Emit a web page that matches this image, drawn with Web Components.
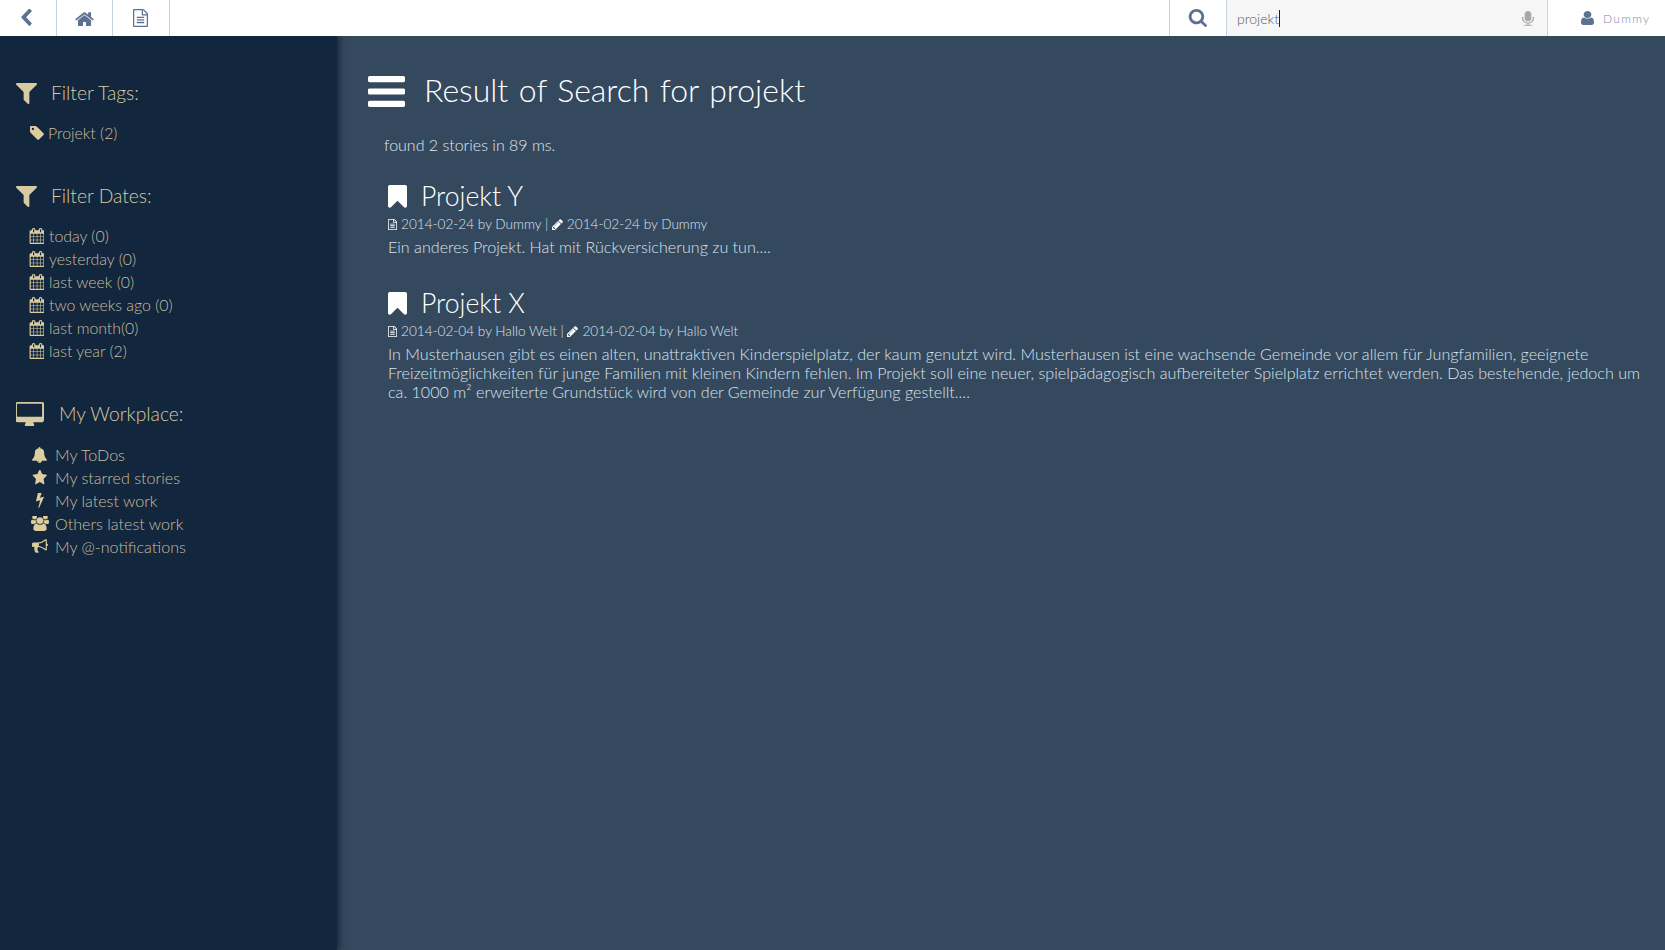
<!DOCTYPE html>
<html lang="en">
<head>
<meta charset="utf-8">
<title>Result of Search for projekt</title>
<style>
  html, body { margin: 0; height: 100%; }
  body { font-family: Lato, "Liberation Sans", sans-serif; font-weight: 300; background: #34495e; overflow: hidden; }
</style>
</head>
<body>
<app-shell>
  <top-bar slot="top" query="projekt" user="Dummy"></top-bar>
  <side-nav slot="side">
    <nav-section icon="filter" label="Filter Tags:" gap="14">
      <nav-item icon="tag" text-gap="4">Projekt (2)</nav-item>
    </nav-section>
    <nav-section icon="filter" label="Filter Dates:" gap="14">
      <nav-item icon="calendar">today (0)</nav-item>
      <nav-item icon="calendar">yesterday (0)</nav-item>
      <nav-item icon="calendar">last week (0)</nav-item>
      <nav-item icon="calendar">two weeks ago (0)</nav-item>
      <nav-item icon="calendar">last month(0)</nav-item>
      <nav-item icon="calendar">last year (2)</nav-item>
    </nav-section>
    <nav-section icon="desktop" label="My Workplace:" gap="15" wide>
      <nav-item icon="bell" icon-box="21" text-gap="5">My ToDos</nav-item>
      <nav-item icon="star" icon-box="21" text-gap="5">My starred stories</nav-item>
      <nav-item icon="bolt" icon-box="21" text-gap="5">My latest work</nav-item>
      <nav-item icon="users" icon-box="21" text-gap="5">Others latest work</nav-item>
      <nav-item icon="bullhorn" icon-box="21" text-gap="5">My @-notifications</nav-item>
    </nav-section>
  </side-nav>
  <search-results heading="Result of Search for projekt" summary="found 2 stories in 89 ms.">
    <story-item title="Projekt Y" created="2014-02-24 by Dummy" edited="2014-02-24 by Dummy">Ein anderes Projekt. Hat mit Rückversicherung zu tun....</story-item>
    <story-item title="Projekt X" created="2014-02-04 by Hallo Welt" edited="2014-02-04 by Hallo Welt">In Musterhausen gibt es einen alten, unattraktiven Kinderspielplatz, der kaum genutzt wird. Musterhausen ist eine wachsende Gemeinde vor allem für Jungfamilien, geeignete Freizeitmöglichkeiten für junge Familien mit kleinen Kindern fehlen. Im Projekt soll eine neuer, spielpädagogisch aufbereiteter Spielplatz errichtet werden. Das bestehende, jedoch um ca. 1000 m² erweiterte Grundstück wird von der Gemeinde zur Verfügung gestellt....</story-item>
  </search-results>
</app-shell>

<script>
// icon outlines, each with its own viewBox
const ICONS = {
  back: ['192 64 1280 1664', 'M1427 301l-531 531 531 531q19 19 19 45t-19 45l-166 166q-19 19-45 19t-45-19l-742-742q-19-19-19-45t19-45l742-742q19-19 45-19t45 19l166 166q19 19 19 45t-19 45z'],
  home: ['64 128 1664 1408', 'M1472 992v480q0 26-19 45t-45 19h-384v-384h-256v384h-384q-26 0-45-19t-19-45v-480q0-1 .5-3t.5-3l575-474 575 474q1 2 1 6zm223-69l-62 74q-8 9-21 11h-3q-13 0-21-7l-692-577-692 577q-12 8-24 7-13-2-21-11l-62-74q-8-10-7-23.5t11-21.5l719-599q32-26 76-26t76 26l244 204v-195q0-14 9-23t23-9h192q14 0 23 9t9 23v408l219 182q10 8 11 21.5t-7 23.5z'],
  file: ['128 0 1536 1792', 'M1596 380q28 28 48 76t20 88v1152q0 40-28 68t-68 28h-1344q-40 0-68-28t-28-68v-1600q0-40 28-68t68-28h896q40 0 88 20t76 48zm-444-244v376h376q-10-29-22-41l-313-313q-12-12-41-22zm384 1528v-1024h-416q-40 0-68-28t-28-68v-416h-768v1536h1280zm-1024-864q0-14 9-23t23-9h704q14 0 23 9t9 23v64q0 14-9 23t-23 9h-704q-14 0-23-9t-9-23v-64zm736 224q14 0 23 9t9 23v64q0 14-9 23t-23 9h-704q-14 0-23-9t-9-23v-64q0-14 9-23t23-9h704zm0 256q14 0 23 9t9 23v64q0 14-9 23t-23 9h-704q-14 0-23-9t-9-23v-64q0-14 9-23t23-9h704z'],
  search: ['0 128 1728 1664', 'M1216 832q0-185-131.5-316.5t-316.5-131.5-316.5 131.5-131.5 316.5 131.5 316.5 316.5 131.5 316.5-131.5 131.5-316.5zm512 832q0 52-38 90t-90 38q-54 0-90-38l-343-342q-179 124-399 124-143 0-273.5-55.5t-225-150-150-225-55.5-273.5 55.5-273.5 150-225 225-150 273.5-55.5 273.5 55.5 225 150 150 225 55.5 273.5q0 220-124 399l343 343q37 37 37 90z'],
  user: ['256 128 1280 1536', 'M1536 1399q0 109-62.5 187t-150.5 78h-854q-88 0-150.5-78t-62.5-187q0-85 8.5-160.5t31.5-152 58.5-131 94-89 134.5-34.5q131 128 313 128t313-128q76 0 134.5 34.5t94 89 58.5 131 31.5 152 8.5 160.5zm-256-887q0 159-112.5 271.5t-271.5 112.5-271.5-112.5-112.5-271.5 112.5-271.5 271.5-112.5 271.5 112.5 112.5 271.5z'],
  mic: ['320 0 1152 1792', 'M1472 704v128q0 221-147.5 384.5t-364.5 187.5v132h256q26 0 45 19t19 45-19 45-45 19h-640q-26 0-45-19t-19-45 19-45 45-19h256v-132q-217-24-364.5-187.5t-147.5-384.5v-128q0-26 19-45t45-19 45 19 19 45v128q0 185 131.5 316.5t316.5 131.5 316.5-131.5 131.5-316.5v-128q0-26 19-45t45-19 45 19 19 45zm-256-384v512q0 132-94 226t-226 94-226-94-94-226v-512q0-132 94-226t226-94 226 94 94 226z'],
  filter: ['192 256 1408 1408', 'M1595 295q17 41-14 70l-493 493v742q0 42-39 59-13 5-25 5-27 0-45-19l-256-256q-19-19-19-45v-486l-493-493q-31-29-14-70 17-39 59-39h1280q42 0 59 39z'],
  tag: ['128 128 1536 1536', 'M576 448q0-53-37.5-90.5t-90.5-37.5-90.5 37.5-37.5 90.5 37.5 90.5 90.5 37.5 90.5-37.5 37.5-90.5zm1067 576q0 53-37 90l-491 492q-39 37-91 37-53 0-90-37l-715-716q-38-37-64.5-101t-26.5-117v-416q0-52 38-90t90-38h416q53 0 117 26.5t102 64.5l715 714q37 39 37 91z'],
  calendar: ['0 0 1664 1792', 'M192 1664h288v-288h-288v288zm352 0h320v-288h-320v288zm-352-352h288v-320h-288v320zm352 0h320v-320h-320v320zm-352-384h288v-288h-288v288zm736 736h320v-288h-320v288zm-384-736h320v-288h-320v288zm768 736h288v-288h-288v288zm-384-352h320v-320h-320v320zm-352-864v-288q0-13-9.5-22.5t-22.5-9.5h-64q-13 0-22.5 9.5t-9.5 22.5v288q0 13 9.5 22.5t22.5 9.5h64q13 0 22.5-9.5t9.5-22.5zm736 864h288v-320h-288v320zm-384-384h320v-288h-320v288zm384 0h288v-288h-288v288zm32-480v-288q0-13-9.5-22.5t-22.5-9.5h-64q-13 0-22.5 9.5t-9.5 22.5v288q0 13 9.5 22.5t22.5 9.5h64q13 0 22.5-9.5t9.5-22.5zm384-64v1280q0 52-38 90t-90 38h-1408q-52 0-90-38t-38-90v-1280q0-52 38-90t90-38h128v-96q0-66 47-113t113-47h64q66 0 113 47t47 113v96h384v-96q0-66 47-113t113-47h64q66 0 113 47t47 113v96h128q52 0 90 38t38 90z'],
  desktop: ['0 0 1856 1664', 'M1728 992v-832q0-13-9.5-22.5t-22.5-9.5h-1600q-13 0-22.5 9.5t-9.5 22.5v832q0 13 9.5 22.5t22.5 9.5h1600q13 0 22.5-9.5t9.5-22.5zm128-832v1088q0 66-47 113t-113 47h-544q0 37 16 77.5t32 71 16 43.5q0 26-19 45t-45 19h-512q-26 0-45-19t-19-45q0-14 16-44t32-70 16-78h-544q-66 0-113-47t-47-113v-1088q0-66 47-113t113-47h1632q66 0 113 47t47 113z'],
  bell: ['64 0 1664 1792', 'M912 1696q0-16-16-16-59 0-101.5-42.5t-42.5-101.5q0-16-16-16t-16 16q0 73 51.5 124.5t124.5 51.5q16 0 16-16zm816-288q0 52-38 90t-90 38h-448q0 106-75 181t-181 75-181-75-75-181h-448q-52 0-90-38t-38-90q50-42 91-88t85-119.5 74.5-158.5 50-206 19.5-260q0-152 117-282.5t307-158.5q-8-19-8-39 0-40 28-68t68-28 68 28 28 68q0 20-8 39 190 28 307 158.5t117 282.5q0 139 19.5 260t50 206 74.5 158.5 85 119.5 91 88z'],
  star: ['0 96 1728 1600', 'M1728 647q0 22-26 48l-363 354 86 500q1 7 1 20 0 21-10.5 35.5t-30.5 14.5q-19 0-40-12l-449-236-449 236q-22 12-40 12-21 0-31.5-14.5t-10.5-35.5q0-6 2-20l86-500-364-354q-25-27-25-48 0-37 56-46l502-73 225-455q19-41 49-41t49 41l225 455 502 73q56 9 56 46z'],
  bolt: ['440 128 910 1664', 'M1333 566q18 20 7 44l-540 1157q-13 25-42 25-4 0-14-2-17-5-25.5-19t-4.5-30l197-808-406 101q-4 1-12 1-18 0-31-11-18-15-13-39l201-825q4-14 16-23t28-9h328q19 0 32 12.5t13 29.5q0 8-5 18l-171 463 396-98q8-2 12-2 19 0 34 15z'],
  users: ['0 128 1920 1664', 'M593 896q-162 5-265 128h-134q-82 0-138-40.5t-56-118.5q0-353 124-353 6 0 43.5 21t97.5 42.5 119 21.5q67 0 133-23-5 37-5 66 0 139 81 256zm1071 637q0 120-73 189.5t-194 69.5h-874q-121 0-194-69.5t-73-189.5q0-53 3.5-103.5t14-109 26.5-108.5 43-97.5 62-81 85.5-53.5 111.5-20q10 0 43 21.5t73 48 107 48 135 21.5 135-21.5 107-48 73-48 43-21.5q61 0 111.5 20t85.5 53.5 62 81 43 97.5 26.5 108.5 14 109 3.5 103.5zm-1024-1277q0 106-75 181t-181 75-181-75-75-181 75-181 181-75 181 75 75 181zm704 384q0 159-112.5 271.5t-271.5 112.5-271.5-112.5-112.5-271.5 112.5-271.5 271.5-112.5 271.5 112.5 112.5 271.5zm576 225q0 78-56 118.5t-138 40.5h-134q-103-123-265-128 81-117 81-256 0-29-5-66 66 23 133 23 59 0 119-21.5t97.5-42.5 43.5-21q124 0 124 353zm-128-609q0 106-75 181t-181 75-181-75-75-181 75-181 181-75 181 75 75 181z'],
  bullhorn: ['0 128 1792 1664', 'M1664 640q53 0 90.5 37.5t37.5 90.5-37.5 90.5-90.5 37.5v384q0 52-38 90t-90 38q-417-347-812-380-58 19-91 66t-31 100.5 40 92.5q-20 33-23 65.5t6 58 33.5 55 48 50 61.5 50.5q-29 58-111.5 83t-168.5 11.5-132-55.5q-7-23-29.5-87.5t-32-94.5-23-89-15-101 3.5-98.5 22-110.5h-122q-66 0-113-47t-47-113v-192q0-66 47-113t113-47h480q435 0 896-384 52 0 90 38t38 90v384zm-128 604v-954q-394 302-768 343v270q377 42 768 341z'],
  bookmark: ['0 128 1280 1536', 'M1164 128q23 0 44 9 33 13 52.5 41t19.5 62v1289q0 34-19.5 62t-52.5 41q-19 8-44 8-48 0-83-32l-441-424-441 424q-36 33-83 33-23 0-44-9-33-13-52.5-41t-19.5-62v-1289q0-34 19.5-62t52.5-41q21-9 44-9h1048z'],
  pencil: ['128 128 1536 1536', 'M491 1536l91-91-235-235-91 91v107h128v128h107zm523-928q0-22-22-22-10 0-17 7l-542 542q-7 7-7 17 0 22 22 22 10 0 17-7l542-542q7-7 7-17zm-54-192l416 416-832 832h-416v-416zm683 96q0 53-37 90l-166 166-416-416 166-165q36-38 90-38 53 0 91 38l235 234q37 39 37 91z'],
  bars: ['128 256 1536 1280', 'M1664 1344v128q0 26-19 45t-45 19h-1408q-26 0-45-19t-19-45v-128q0-26 19-45t45-19h1408q26 0 45 19t19 45zm0-512v128q0 26-19 45t-45 19h-1408q-26 0-45-19t-19-45v-128q0-26 19-45t45-19h1408q26 0 45 19t19 45zm0-512v128q0 26-19 45t-45 19h-1408q-26 0-45-19t-19-45v-128q0-26 19-45t45-19h1408q26 0 45 19t19 45z']
}

/**
 * Draws one named icon at the given width and height.
 */
class FaIcon extends HTMLElement {
  connectedCallback () {
    const [box, d] = ICONS[this.getAttribute('name')]
    const w = this.getAttribute('w') || 16
    const h = this.getAttribute('h') || 16
    this.attachShadow({ mode: 'open' }).innerHTML = `
      <style>:host { display: inline-flex; flex: none; } svg { display: block; fill: currentColor; }</style>
      <svg width="${w}" height="${h}" viewBox="${box}" preserveAspectRatio="none"><path d="${d}"/></svg>`
  }
}
customElements.define('fa-icon', FaIcon)

const shellTemplate = document.createElement('template')
shellTemplate.innerHTML = `
  <style>
    :host { display: grid; grid-template: 36px 1fr / 337px 1fr; height: 950px; }
    ::slotted([slot=top]) { grid-column: 1 / 3; }
  </style>
  <slot name="top"></slot>
  <slot name="side"></slot>
  <slot></slot>`

class AppShell extends HTMLElement {
  constructor () {
    super()
    this.attachShadow({ mode: 'open' }).appendChild(shellTemplate.content.cloneNode(true))
  }
}
customElements.define('app-shell', AppShell)

/**
 * White bar on top: back, home and file buttons, then search and user.
 */
class TopBar extends HTMLElement {
  connectedCallback () {
    this.attachShadow({ mode: 'open' }).innerHTML = `
      <style>
        :host { display: flex; background: #fff; color: #5d7290; height: 36px; position: relative; z-index: 2; }
        .btn { display: flex; align-items: center; justify-content: center; box-sizing: border-box; border-right: 1px solid #c8d3e0; }
        .spacer { flex: 1; border-right: 1px solid #c8d3e0; }
        .query { width: 321px; background: #f6f6f6; border-right: 1px solid #c8d3e0; display: flex; align-items: center; padding-left: 10px; box-sizing: border-box; font-size: 14px; color: #535d72; }
        .caret { width: 1px; height: 17px; background: #222; }
        .mic { margin-left: auto; margin-right: 13px; color: #a9a9a9; margin-top: 2px; }
        .user { width: 117px; display: flex; align-items: center; padding-left: 33px; box-sizing: border-box; gap: 9px; font-size: 12px; letter-spacing: 1.3px; color: #7f88b2; }
        .user fa-icon { color: #5d7290; }
      </style>
      <div class="btn" style="width:57px;padding-right:5px"><fa-icon name="back" w="13" h="18"></fa-icon></div>
      <div class="btn" style="width:56px"><fa-icon name="home" w="19" h="15"></fa-icon></div>
      <div class="btn" style="width:57px;padding-right:1px"><fa-icon name="file" w="15" h="18"></fa-icon></div>
      <div class="spacer"></div>
      <div class="btn" style="width:57px;padding-right:2px"><fa-icon name="search" w="19" h="18"></fa-icon></div>
      <div class="query"><span>${this.getAttribute('query')}</span><span class="caret"></span><fa-icon class="mic" name="mic" w="12" h="16"></fa-icon></div>
      <div class="user"><fa-icon name="user" w="13" h="14"></fa-icon><span>${this.getAttribute('user')}</span></div>`
  }
}
customElements.define('top-bar', TopBar)

const sideTemplate = document.createElement('template')
sideTemplate.innerHTML = `
  <style>
    :host { display: block; background: #12263d; box-shadow: 3px 0 5px rgba(8, 20, 34, .55); padding: 43px 0 0 16px; position: relative; z-index: 1; color: #d8cba1; }
  </style>
  <slot></slot>`

class SideNav extends HTMLElement {
  constructor () {
    super()
    this.attachShadow({ mode: 'open' }).appendChild(sideTemplate.content.cloneNode(true))
  }
}
customElements.define('side-nav', SideNav)

/**
 * A heading with a big icon and a list of nav-item below it.
 */
class NavSection extends HTMLElement {
  connectedCallback () {
    const wide = this.hasAttribute('wide')
    this.attachShadow({ mode: 'open' }).innerHTML = `
      <style>
        :host { display: block; margin-bottom: 38px; --item-size: ${wide ? 16.1 : 15.85}px; }
        h3 { display: flex; align-items: center; margin: 0; font-size: 19.3px; font-weight: 300; line-height: 28px; gap: ${wide ? 15 : 14}px; }
        .list { display: block; margin-top: ${this.getAttribute('gap')}px; padding-left: 13px; }
      </style>
      <h3><fa-icon name="${this.getAttribute('icon')}" w="${wide ? 28 : 21}" h="${wide ? 24 : 21}"></fa-icon><span>${this.getAttribute('label')}</span></h3>
      <div class="list"><slot></slot></div>`
  }
}
customElements.define('nav-section', NavSection)

const ITEM_SIZES = { tag: [14, 14], calendar: [15, 16], bell: [15, 16], star: [15, 15], bolt: [8, 15], users: [18, 15], bullhorn: [16, 15] }

class NavItem extends HTMLElement {
  connectedCallback () {
    const icon = this.getAttribute('icon')
    const [w, h] = ITEM_SIZES[icon]
    const box = this.getAttribute('icon-box') || 15
    const gap = this.getAttribute('text-gap') || 5
    this.attachShadow({ mode: 'open' }).innerHTML = `
      <style>
        :host { display: flex; align-items: center; height: 23px; font-size: var(--item-size); color: #c9bf9f; }
        .ico { width: ${box}px; display: flex; justify-content: center; color: #dccd9f; margin-right: ${gap}px; }
      </style>
      <span class="ico"><fa-icon name="${icon}" w="${w}" h="${h}"></fa-icon></span><slot></slot>`
  }
}
customElements.define('nav-item', NavItem)

/**
 * The main column: heading, summary line and the found stories.
 */
class SearchResults extends HTMLElement {
  connectedCallback () {
    this.attachShadow({ mode: 'open' }).innerHTML = `
      <style>
        :host { display: block; padding: 34px 17px 0 31px; color: #e0e7ee; }
        h1 { display: flex; align-items: center; gap: 19px; margin: 0; height: 42px; color: #fff; font-size: 32px; font-weight: 300; line-height: 42px; word-spacing: 1.8px; }
        h1 span { margin-bottom: 2px; }
        .summary { margin: 22px 0 0 16px; font-size: 16px; line-height: 22px; }
        .stories { margin: 22px 0 0 20px; }
      </style>
      <h1><fa-icon name="bars" w="37" h="31"></fa-icon><span>${this.getAttribute('heading')}</span></h1>
      <p class="summary">${this.getAttribute('summary')}</p>
      <div class="stories"><slot></slot></div>`
  }
}
customElements.define('search-results', SearchResults)

class StoryItem extends HTMLElement {
  connectedCallback () {
    this.attachShadow({ mode: 'open' }).innerHTML = `
      <style>
        :host { display: block; margin-bottom: 29px; }
        h2 { display: flex; align-items: center; gap: 14px; margin: 0; color: #fff; font-size: 26.6px; font-weight: 300; line-height: 36px; }
        .meta { display: flex; align-items: center; font-size: 13.6px; line-height: 20px; margin-top: 0; color: #dce5ee; white-space: pre; }
        .meta fa-icon { color: #fff; margin-right: 4px; }
        .body { font-size: 16.12px; line-height: 19px; margin-top: 3px; color: #dbe4ec; }
      </style>
      <h2><fa-icon name="bookmark" w="19" h="23"></fa-icon><span>${this.getAttribute('title')}</span></h2>
      <div class="meta"><fa-icon name="file" w="9" h="11"></fa-icon><span>${this.getAttribute('created')} | </span><fa-icon name="pencil" w="11" h="11"></fa-icon><span>${this.getAttribute('edited')}</span></div>
      <div class="body"><slot></slot></div>`
  }
}
customElements.define('story-item', StoryItem)
</script>
</body>
</html>
